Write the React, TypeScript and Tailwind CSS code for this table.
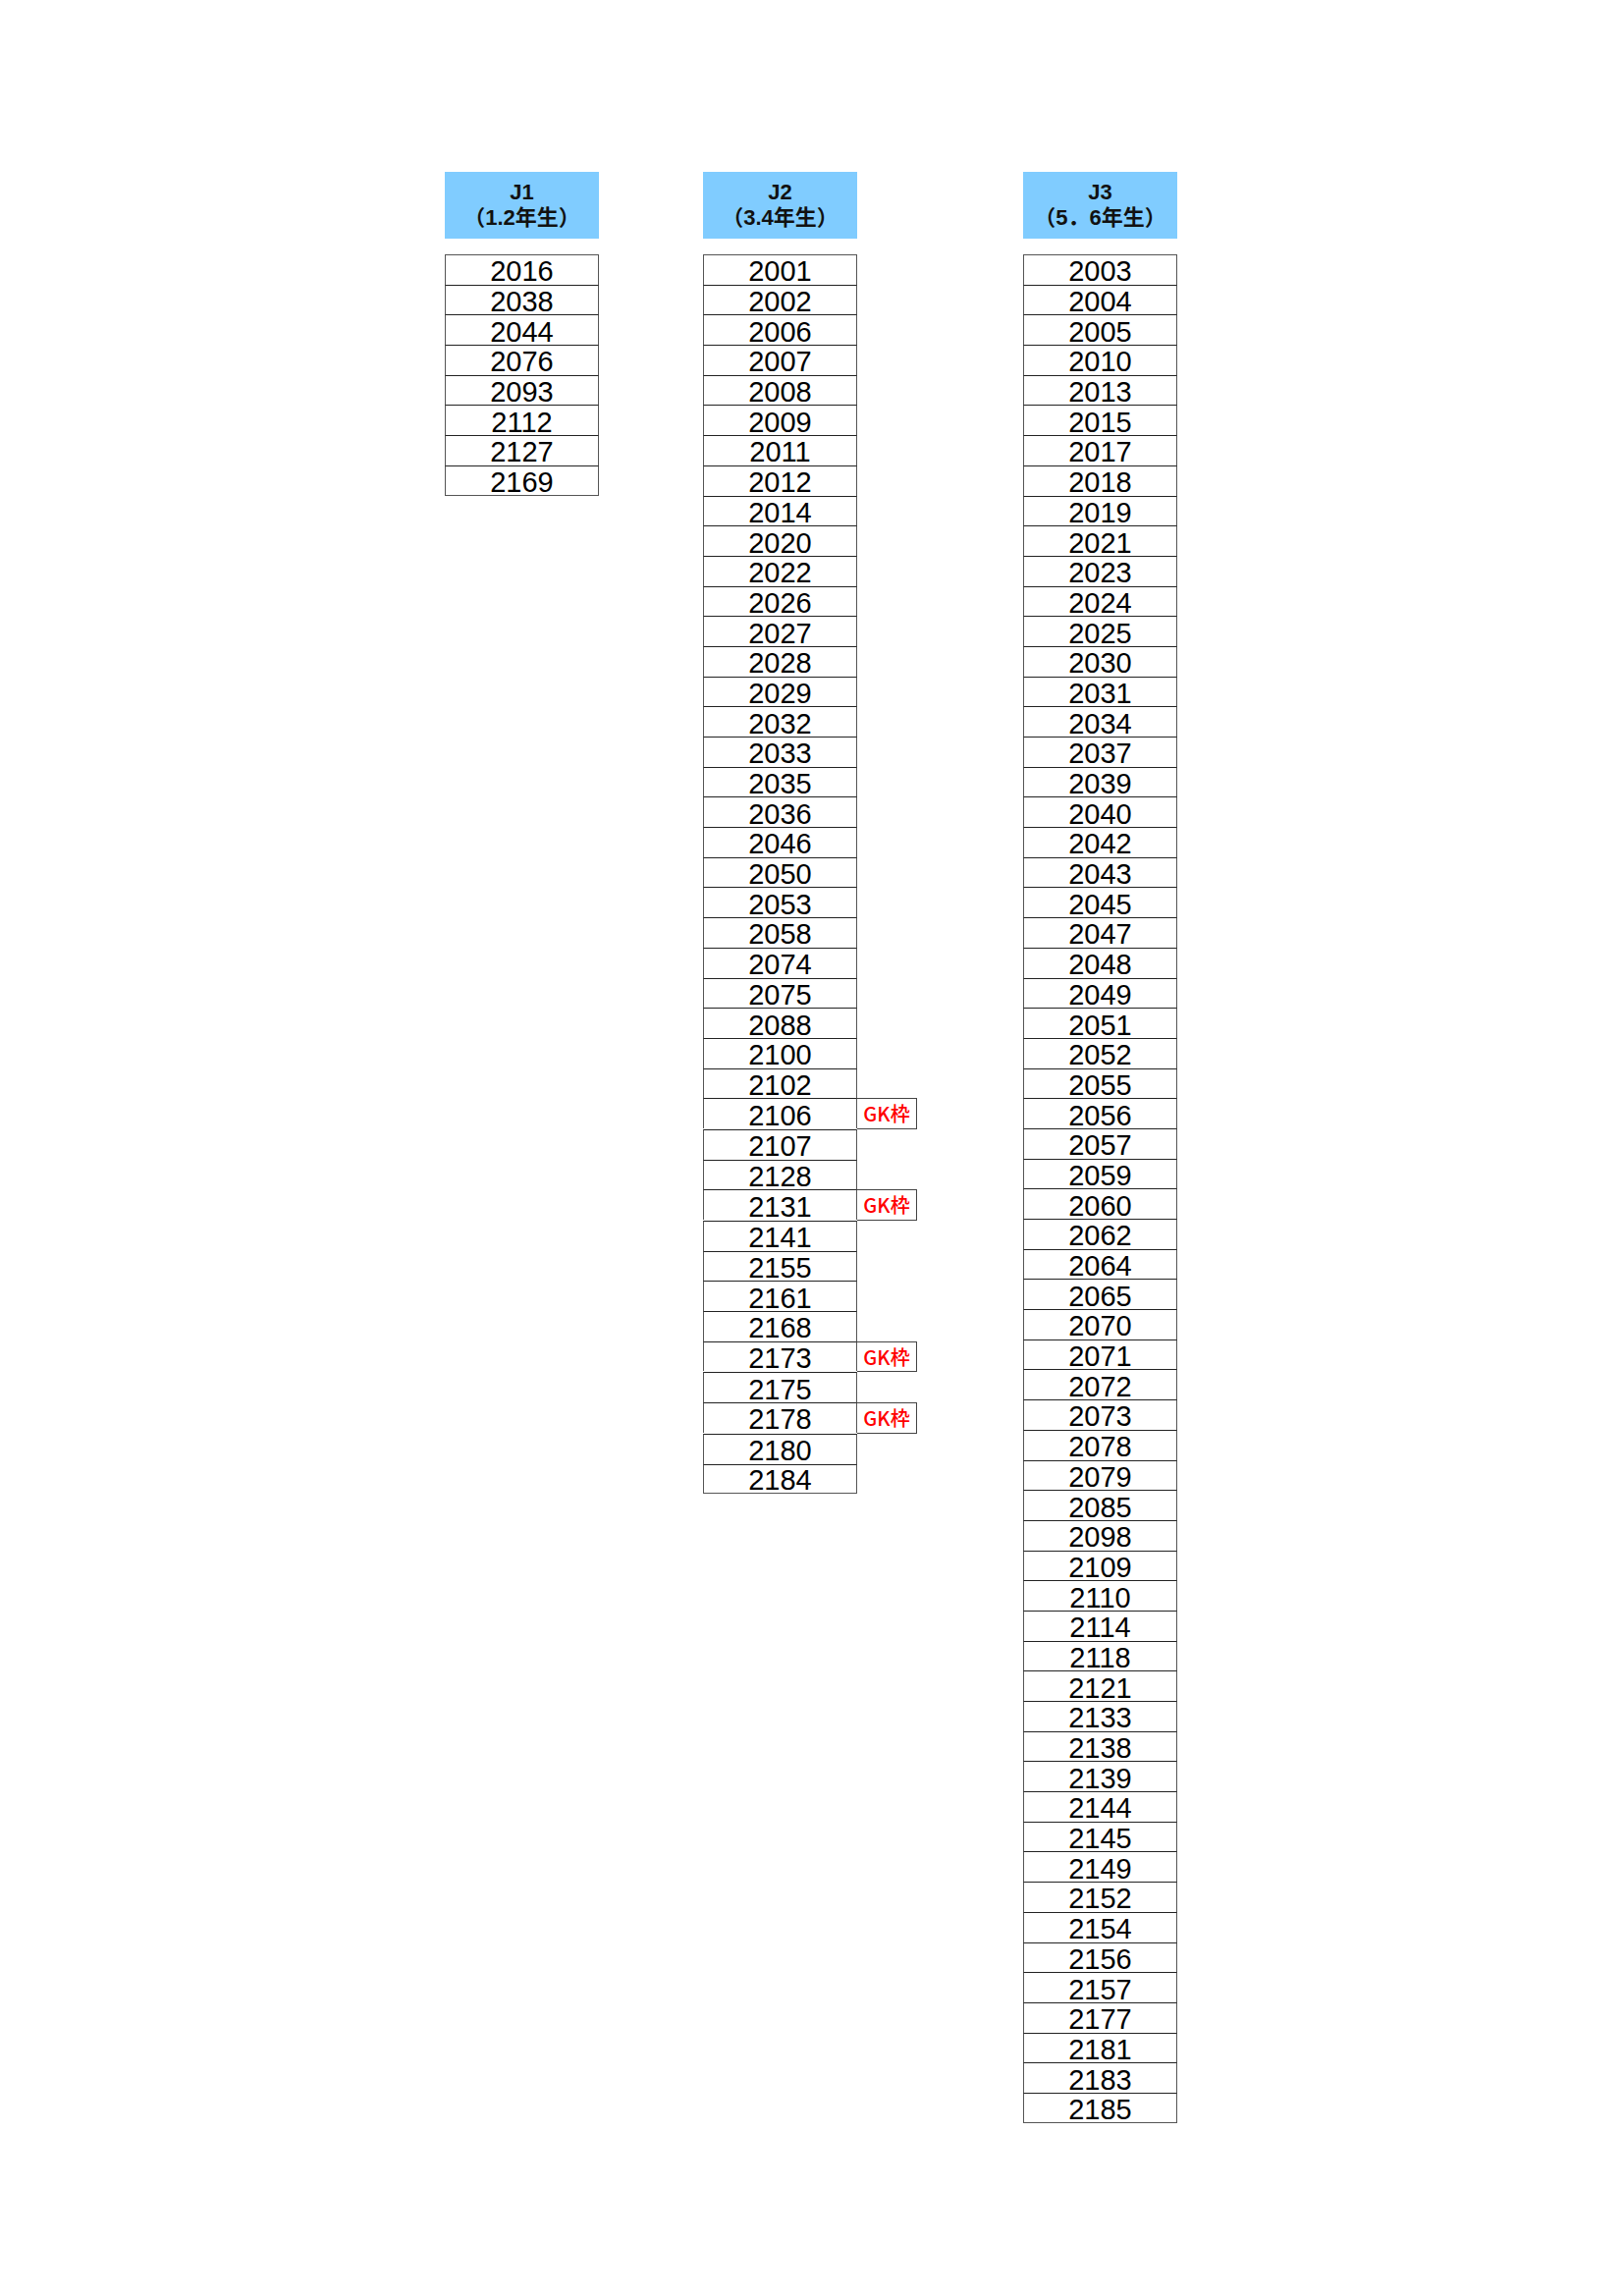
import React from "react";

const j1 = [2016, 2038, 2044, 2076, 2093, 2112, 2127, 2169];
const j2 = [2001, 2002, 2006, 2007, 2008, 2009, 2011, 2012, 2014, 2020, 2022, 2026, 2027, 2028, 2029, 2032, 2033, 2035, 2036, 2046, 2050, 2053, 2058, 2074, 2075, 2088, 2100, 2102, 2106, 2107, 2128, 2131, 2141, 2155, 2161, 2168, 2173, 2175, 2178, 2180, 2184];
const j3 = [2003, 2004, 2005, 2010, 2013, 2015, 2017, 2018, 2019, 2021, 2023, 2024, 2025, 2030, 2031, 2034, 2037, 2039, 2040, 2042, 2043, 2045, 2047, 2048, 2049, 2051, 2052, 2055, 2056, 2057, 2059, 2060, 2062, 2064, 2065, 2070, 2071, 2072, 2073, 2078, 2079, 2085, 2098, 2109, 2110, 2114, 2118, 2121, 2133, 2138, 2139, 2144, 2145, 2149, 2152, 2154, 2156, 2157, 2177, 2181, 2183, 2185];
const gk = new Set([2106, 2131, 2173, 2178]);

function Header({ title, sub }: { title: string; sub: string }) {
  return (
    <div
      className="w-[157px] h-[68px] bg-[#80ccff] flex flex-col items-center justify-center text-[22px] font-bold leading-[26px] text-[#111]"
      style={{ fontFamily: '"Liberation Sans", "Noto Sans CJK JP", sans-serif' }}
    >
      <div>{title}</div>
      <div>{sub}</div>
    </div>
  );
}

function Column({ items, withGk }: { items: number[]; withGk?: boolean }) {
  return (
    <div className="mt-[16px] flex flex-col">
      {items.map((n, i) => (
        <div key={n} className="flex">
          <div
            className={
              "w-[157px] h-[30.7px] border-x border-[#555] flex items-center justify-center text-[29px] leading-none text-black " +
              (i === 0 ? "border-t " : "border-t border-t-[#222] ") +
              (i === items.length - 1 ? "border-b" : "")
            }
            style={{ fontFamily: '"Liberation Sans", Arial, sans-serif' }}
          >
            <span className="translate-y-[2px]">{n}</span>
          </div>
          {withGk && gk.has(n) ? (
            <div
              className="w-[61px] h-[31.7px] border border-l-0 border-[#444] flex items-center justify-center text-[20px] font-medium text-[#ff0000] leading-none"
              style={{ fontFamily: '"Noto Sans CJK JP", "Noto Sans", sans-serif' }}
            >
              GK枠
            </div>
          ) : withGk ? (
            <div className="w-[61px]" />
          ) : null}
        </div>
      ))}
    </div>
  );
}

export default function App() {
  return (
    <div className="w-[1654px] h-[2338px] bg-white pt-[175px]">
      <div className="flex items-start pl-[453px]">
        <div className="flex flex-col">
          <Header title="J1" sub="（1.2年生）" />
          <Column items={j1} />
        </div>
        <div className="flex flex-col ml-[106px]">
          <Header title="J2" sub="（3.4年生）" />
          <Column items={j2} withGk />
        </div>
        <div className="flex flex-col ml-[108px]">
          <Header title="J3" sub="（5．6年生）" />
          <Column items={j3} />
        </div>
      </div>
    </div>
  );
}
